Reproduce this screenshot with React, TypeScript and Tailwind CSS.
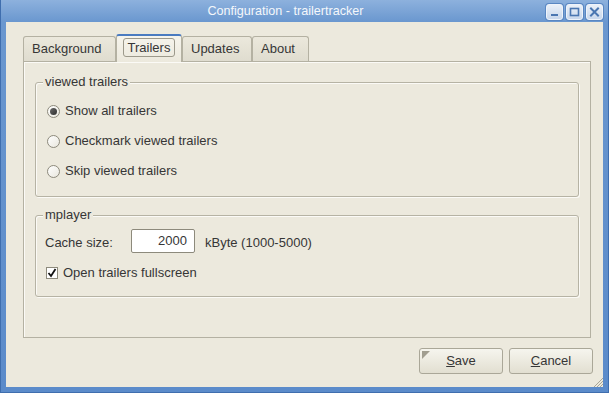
import React from "react";

function TitleButton({ kind }: { kind: "min" | "max" | "close" }) {
  return (
    <div className="w-[17px] h-[16px] rounded-[3px] border border-[#eef3fa] bg-gradient-to-b from-[#eaf0f8] to-[#c8d7ec] flex items-center justify-center shadow-[0_0_0_1px_#5a87c2]">
      <svg width="11" height="10" viewBox="0 0 11 10">
        {kind === "min" && <rect x="2" y="7" width="7" height="2" fill="#4a76b1" />}
        {kind === "max" && (
          <rect x="1.5" y="1.5" width="8" height="7" fill="none" stroke="#4a76b1" strokeWidth="1.6" />
        )}
        {kind === "close" && (
          <path d="M2 1.5 L9 8.5 M9 1.5 L2 8.5" stroke="#4a76b1" strokeWidth="2" strokeLinecap="square" />
        )}
      </svg>
    </div>
  );
}

function Radio({ checked, label }: { checked?: boolean; label: string }) {
  return (
    <div className="h-[30px] flex items-center gap-[5px]">
      <div className="w-[13px] h-[13px] rounded-full border border-[#8d8a7c] bg-gradient-to-br from-[#ffffff] to-[#e9e7de] flex items-center justify-center">
        {checked && <div className="w-[7px] h-[7px] rounded-full bg-gradient-to-br from-[#6b6b6b] to-[#2e2e2e]" />}
      </div>
      <span>{label}</span>
    </div>
  );
}

function GroupBox({ title, className, children }: { title: string; className: string; children: React.ReactNode }) {
  return (
    <div className={"relative rounded-[3px] border border-[#b6b3a4] shadow-[inset_1px_1px_0_#fbfaf6,1px_1px_0_#fbfaf6] " + className}>
      <span className="absolute -top-[9px] left-[7px] px-[2px] bg-[#ece9dd] leading-[16px]">{title}</span>
      {children}
    </div>
  );
}

function Tab({ label, w, selected }: { label: string; w: string; selected?: boolean }) {
  if (selected) {
    return (
      <div className={"relative z-10 -mb-px h-[28px] rounded-t-[3px] border-x border-[#b4b1a2] border-t-2 border-t-[#4a7bc0] bg-gradient-to-b from-[#f6f4ec] to-[#ece9dd] flex items-start justify-center pt-[2px] " + w}>
        <div className="h-[19px] px-[4px] rounded-[3px] border border-[#9c998b] flex items-center leading-none">{label}</div>
      </div>
    );
  }
  return (
    <div className={"h-[25px] rounded-t-[3px] border border-b-0 border-[#b4b1a2] bg-gradient-to-b from-[#ebe8dc] to-[#dfdccf] flex items-center pl-[8px] " + w}>
      {label}
    </div>
  );
}

function Button({ children, isDefault }: { children: React.ReactNode; isDefault?: boolean }) {
  return (
    <div className="relative w-[84px] h-[26px] rounded-[3px] border border-[#aaa798] bg-gradient-to-b from-[#f6f5ee] to-[#e2dfd1] flex items-center justify-center">
      {isDefault && (
        <svg className="absolute left-[2px] top-[2px]" width="8" height="8" viewBox="0 0 8 8">
          <path d="M0 0 H8 L0 8 Z" fill="#a19e90" />
        </svg>
      )}
      {children}
    </div>
  );
}

export default function App() {
  return (
    <div
      className="w-[609px] h-[393px] flex flex-col bg-[#5f8fcd] text-[13px] text-[#363636] overflow-hidden border-l border-r border-b border-[#3f6eae]"
      style={{ fontFamily: '"Liberation Sans", Arial, sans-serif' }}
    >
      <div className="h-[22px] shrink-0 flex items-center bg-gradient-to-b from-[#8db1dd] to-[#6a97cf] pr-[5px]">
        <div className="flex-1 pl-[24px] text-center text-[#f4f7fb] text-[12.6px] leading-none">Configuration - trailertracker</div>
        <div className="flex gap-[3px] pt-[1px]">
          <TitleButton kind="min" />
          <TitleButton kind="max" />
          <TitleButton kind="close" />
        </div>
      </div>
      <div className="flex-1 flex px-[5px] pb-[5px] bg-gradient-to-b from-[#6a97cf] to-[#5b8bca]">
        <div className="relative flex-1 bg-[#ece9dd] flex flex-col pl-[17px] pr-[11px] pt-[12px]">
          <div className="flex items-end h-[27px]">
            <Tab label="Background" w="w-[93px]" />
            <Tab label="Trailers" w="w-[66px]" selected />
            <Tab label="Updates" w="w-[70px]" />
            <Tab label="About" w="w-[57px]" />
          </div>
          <div className="w-[568px] h-[277px] border border-[#b4b1a2] shadow-[inset_1px_1px_0_#fbfaf6] pl-[11px] pr-[11px] pt-[20px] flex flex-col gap-[18px]">
            <GroupBox title="viewed trailers" className="h-[115px] pl-[11px] pt-[13px]">
              <Radio checked label="Show all trailers" />
              <Radio label="Checkmark viewed trailers" />
              <Radio label="Skip viewed trailers" />
            </GroupBox>
            <GroupBox title="mplayer" className="h-[82px] pl-[9px] pt-[13px]">
              <div className="flex items-center h-[24px]">
                <span className="w-[86px] pt-[3px]">Cache size:</span>
                <div className="w-[64px] h-[24px] rounded-[2px] border border-[#8d8a7c] bg-white flex items-center justify-end pr-[7px]">2000</div>
                <span className="ml-[10px] pt-[3px]">kByte (1000-5000)</span>
              </div>
              <div className="flex items-center h-[16px] mt-[12px] gap-[5px] pl-[1px]">
                <div className="w-[12px] h-[12px] border border-[#8d8a7c] bg-white flex items-center justify-center">
                  <svg width="10" height="10" viewBox="0 0 10 10">
                    <path d="M1.5 5 L4 8 L8.5 1" fill="none" stroke="#111" strokeWidth="1.8" />
                  </svg>
                </div>
                <span>Open trailers fullscreen</span>
              </div>
            </GroupBox>
          </div>
          <div className="flex justify-end gap-[6px] mt-[10px] -mr-px">
            <Button isDefault>
              <span><span className="underline">S</span>ave</span>
            </Button>
            <Button>
              <span><span className="underline">C</span>ancel</span>
            </Button>
          </div>
          <svg className="absolute right-0 bottom-0" width="10" height="10" viewBox="0 0 10 10">
            <path d="M10 1 L1 10 M10 4 L4 10 M10 7 L7 10" stroke="#a8a596" strokeWidth="1" />
          </svg>
        </div>
      </div>
    </div>
  );
}
